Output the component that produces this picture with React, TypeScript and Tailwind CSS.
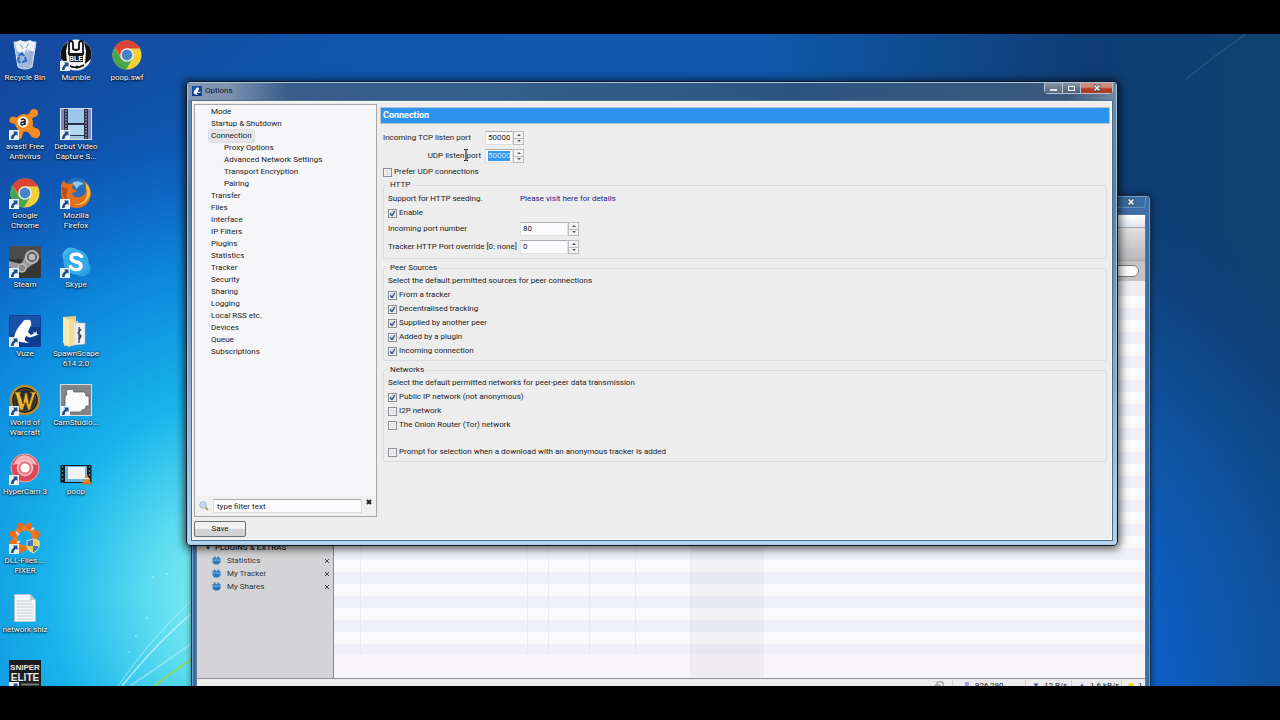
import type { ReactNode } from "react";

const Wallpaper = () => (
  <svg className="absolute inset-0 h-full w-full" viewBox="0 0 1280 652" preserveAspectRatio="none" aria-hidden="true">
    <defs>
      <linearGradient id="sky" x1="0" x2="1">
        <stop offset="0" stopColor="#1549a0" />
        <stop offset="0.3" stopColor="#1058ac" />
        <stop offset="0.6" stopColor="#1059ac" />
        <stop offset="0.85" stopColor="#0f3d74" />
        <stop offset="1" stopColor="#0f4270" />
      </linearGradient>
      <radialGradient id="glow" gradientUnits="userSpaceOnUse" cx="250" cy="560" r="560">
        <stop offset="0" stopColor="#9af4ee" />
        <stop offset="0.18" stopColor="#5cdcf0" />
        <stop offset="0.36" stopColor="#18b4ec" />
        <stop offset="0.6" stopColor="#0c86dc" />
        <stop offset="0.82" stopColor="#0c5cbc" stopOpacity="0.7" />
        <stop offset="1" stopColor="#0c56a8" stopOpacity="0" />
      </radialGradient>
      <radialGradient id="floor" gradientUnits="userSpaceOnUse" cx="920" cy="640" r="540">
        <stop offset="0" stopColor="#0c62c8" />
        <stop offset="0.46" stopColor="#0d5dc0" />
        <stop offset="0.62" stopColor="#1055a4" />
        <stop offset="0.82" stopColor="#0f4688" stopOpacity="0.8" />
        <stop offset="1" stopColor="#0f3c78" stopOpacity="0" />
      </radialGradient>
    </defs>
    <rect width="1280" height="652" fill="url(#sky)" />
    <rect x="380" width="900" height="652" fill="url(#floor)" />
    <rect width="1280" height="652" fill="url(#glow)" />
    <path d="M1185 46 Q1216 20 1246 0" stroke="#6f93b4" strokeWidth="1" fill="none" opacity="0.4" />
    <g fill="none" stroke="#d8fbff">
      <path d="M118 652 Q150 605 196 562" strokeWidth="1" opacity="0.6" />
      <path d="M122 652 Q160 605 196 576" strokeWidth="1.5" opacity="0.7" />
      <path d="M130 652 Q170 625 196 606" strokeWidth="2" opacity="0.4" />
      <path d="M154 652 Q176 636 196 622" stroke="#8fd85a" strokeWidth="2" />
    </g>
    <g fill="#e8feff" opacity="0.5">
      <circle cx="147" cy="584" r="1" />
      <circle cx="136" cy="602" r="1" />
      <circle cx="167" cy="540" r="1" />
      <circle cx="153" cy="543" r="1" />
      <circle cx="129" cy="618" r="1" />
    </g>
  </svg>
);

const Chrome = () => (
  <svg viewBox="0 0 32 32" className="h-8 w-8">
    <circle cx="16" cy="16" r="14.5" fill="#f3cf3a" />
    <path d="M16 16 L3.4 8.8 A14.5 14.5 0 0 1 28.8 9.2 H16 Z" fill="#dc4437" />
    <path d="M3.4 8.8 A14.5 14.5 0 0 0 15 30.5 L21.5 19.5 L16 22.5 L10 19 Z" fill="#4aa64a" />
    <path d="M3.6 8.6 L10.4 19 L16 9.3 H28.7 A14.5 14.5 0 0 0 3.6 8.6" fill="#dc4437" />
    <circle cx="16" cy="16" r="6.8" fill="#f0f2f2" />
    <circle cx="16" cy="16" r="5.4" fill="#4684c8" />
  </svg>
);

const RecycleBin = () => (
  <svg viewBox="0 0 32 32" className="h-8 w-8">
    <path d="M5 3 L9 28 Q16 32 23 28 L27 3 Z" fill="#b8cbe0" fillOpacity="0.85" stroke="#dbe8f4" />
    <path d="M6 4 L11 1 L16 3 L21 1 L26 4 L25 13 L20 11 L15 16 L8 12 Z" fill="#eef3f7" />
    <path d="M9 13 L12 22 M18 10 L15 17 M23 12 L20 24 M11 5 L14 10 M20 4 L17 9" stroke="#8ba3bd" />
    <path d="M10 17 l3 -3 l2 3 M16 18 l1 4 l-4 1 M11 24 l-2 -3 l1 -3" stroke="#2767c8" strokeWidth="2" fill="none" />
  </svg>
);

const Mumble = () => (
  <svg viewBox="0 0 32 32" className="h-8 w-8">
    <circle cx="16" cy="16" r="15.5" fill="#f5f5f5" />
    <path d="M1 20 Q-1 8 8 3 L6 12 L7 25 Z M31 20 Q33 8 24 3 L26 12 L25 25 Z" fill="#111" />
    <path d="M9 16 V5 Q9 2 11 2 Q13 2 13 5 V10 Q16 12 19 10 V5 Q19 2 21 2 Q23 2 23 5 V16" fill="none" stroke="#111" strokeWidth="1.8" />
    <rect x="9" y="14" width="14" height="9" fill="#151515" />
    <path d="M8 26 Q16 31 24 26" stroke="#111" strokeWidth="1.5" fill="none" />
    <circle cx="17" cy="28" r="1.6" fill="#111" />
    <text x="16" y="21.5" textAnchor="middle" fontSize="7" fontWeight="700" fill="#fff" fontFamily="Liberation Sans, sans-serif">BLE</text>
  </svg>
);

const Avast = () => (
  <svg viewBox="0 0 32 32" className="h-8 w-8">
    <g stroke="#f58a1e" strokeLinecap="round" fill="none">
      <path d="M14 15 L25 5" strokeWidth="6" />
      <path d="M14 15 L27 26" strokeWidth="8" />
      <path d="M14 15 L4 12" strokeWidth="7" />
      <path d="M14 15 L10 28" strokeWidth="6" />
    </g>
    <circle cx="25" cy="5" r="4" fill="#f58a1e" />
    <circle cx="26" cy="25" r="5" fill="#f58a1e" />
    <circle cx="15" cy="15" r="9" fill="#f58a1e" />
    <circle cx="14" cy="14" r="5.5" fill="#faf3e8" />
    <path d="M12 12 Q14 10 16 12 V17 M16 14 Q11.5 13.5 12 16 Q13 18 16 15.5" stroke="#222" strokeWidth="1.6" fill="none" />
  </svg>
);

const Debut = () => (
  <svg viewBox="0 0 32 32" className="h-8 w-8">
    <rect x="0.5" y="0.5" width="31" height="31" fill="#7f86bc" stroke="#d9e1ee" />
    <rect x="4" y="1" width="24" height="30" fill="#2a3048" />
    <rect x="8" y="1" width="16" height="14" fill="#9cc6ea" />
    <rect x="8" y="17" width="16" height="10" fill="#b4d6f0" />
    <rect x="8" y="28" width="16" height="3" fill="#a4c4e4" />
    <path d="M6 2 V31 M26 2 V31" stroke="#b9c0d0" strokeWidth="1.2" strokeDasharray="1.5 1.5" />
  </svg>
);

const Firefox = () => (
  <svg viewBox="0 0 32 32" className="h-8 w-8">
    <circle cx="17" cy="14" r="13" fill="#2b6cb8" />
    <path d="M12 6 Q18 2 24 7 Q18 8 17 12 Z" fill="#8cc8ee" />
    <path d="M1 8 Q3 4 4 3 Q5 7 9 7 Q12 6 14 7 Q11 10 13 12 L17 14 Q15 16 12 16 Q13 21 20 20 Q27 18 26 10 Q25 6 23 4 Q31 8 31 17 Q29 31 16 31 Q1 30 1 16 Z" fill="#e2701c" />
    <path d="M26 10 Q29 17 24 24 Q19 28 12 27 Q26 31 30 18 Q31 11 26 6 Z" fill="#f8c13a" />
    <path d="M2 10 Q2 22 9 27 Q4 18 8 12 Z" fill="#b84a16" />
  </svg>
);

const Steam = () => (
  <svg viewBox="0 0 32 32" className="h-8 w-8">
    <rect width="32" height="32" rx="2" fill="#353536" />
    <rect width="32" height="13" rx="2" fill="#4b4b4c" />
    <path d="M0 15 L0 21 L13 26 L27 16 L17 9 L12 18 Z" fill="#9b9c9d" />
    <circle cx="23" cy="11" r="7" fill="#b8b9ba" />
    <circle cx="23" cy="11" r="4.2" fill="#b8b9ba" stroke="#444" strokeWidth="1.4" />
    <circle cx="13" cy="22" r="4" fill="#888" stroke="#c0c0c0" strokeWidth="1.5" />
  </svg>
);

const Skype = () => (
  <svg viewBox="0 0 32 32" className="h-8 w-8">
    <circle cx="11" cy="10" r="8.5" fill="#45b4ea" />
    <circle cx="22" cy="22" r="8.5" fill="#2aa2e2" />
    <circle cx="16" cy="16" r="12.5" fill="#35aae8" />
    <path d="M21.5 10.5 Q19 7.5 15.5 8 Q11 8.5 11.2 12 Q11.5 15 16.5 16 Q21.5 17 21 20.5 Q20 24 15.5 23.6 Q12 23.3 10.5 20.5" stroke="#fff" strokeWidth="3.4" fill="none" strokeLinecap="round" />
  </svg>
);

const Frog = ({ className }: { className: string }) => (
  <svg viewBox="0 0 32 32" className={className}>
    <rect width="32" height="32" rx="2" fill="#0d3c90" />
    <path d="M1 1 H31 V12 Q14 10 1 22 Z" fill="#1a51ab" />
    <path d="M13 8 Q15 4 18 5 Q22 4 22 8 Q23 10 21 12 L19 17 L22 20 L25 18.5 L24 16 L26 18 L28 16 L27.5 19 L30 19 L26 21 L21 22.5 L17 21 Q15 24 16 25.5 L20 28 L11 27 L5 22 Q7 14 13 8 Z" fill="#fff" />
  </svg>
);

const Folder = () => (
  <svg viewBox="0 0 32 32" className="h-8 w-8">
    <path d="M3 2 L16 1 V29 L4 31 Z" fill="#e8cf7d" />
    <path d="M3 2 L9 5 V32 L3 28 Z" fill="#f9eab0" />
    <path d="M11 9 L18 6 V29 L11 31 Z" fill="#fbfbfb" stroke="#c4c4bc" strokeWidth="0.6" />
    <path d="M15 8 L25 8 V29 L15 30 Z" fill="#f1f2f4" stroke="#b4b7bb" strokeWidth="0.6" />
    <path d="M19 12 V28 M21 14 L18 18 L21 21 L19 25" stroke="#3c4858" strokeWidth="1.4" fill="none" />
    <path d="M9 5 L14 3 V29 L9 32 Z" fill="#f3dd91" />
  </svg>
);

const Warcraft = () => (
  <svg viewBox="0 0 32 32" className="h-8 w-8">
    <circle cx="16" cy="16" r="14" fill="#15191f" stroke="#b98d35" strokeWidth="2.4" />
    <circle cx="16" cy="16" r="11" fill="#262c31" stroke="#56502e" />
    <path d="M5 8 L12 8 L11 10 L14 20 L16 9 L18 9 L20 20 L23 10 L21 8 L28 8 L26 10 L21 26 L19 26 L16.5 18 L14 26 L11 26 L7 11 Z" fill="#e9b530" stroke="#6a4710" strokeWidth="0.8" />
  </svg>
);

const CamStudio = () => (
  <svg viewBox="0 0 32 32" className="h-8 w-8">
    <rect x="0.5" y="0.5" width="31" height="31" fill="#828486" stroke="#dadcde" />
    <path d="M6 6 L13 5 L14 8 H24 Q26 9 26 12 H29 V22 H26 Q26 26 22 26 L21 28 H9 L8 26 Q4 25 5 21 V13 L7 10 Z" fill="#fbfbfb" stroke="#55585a" strokeWidth="0.7" />
  </svg>
);

const HyperCam = () => (
  <svg viewBox="0 0 32 32" className="h-8 w-8">
    <circle cx="16" cy="15" r="14" fill="#df4656" stroke="#f1aab0" />
    <path d="M4 12 Q8 2 16 2 Q25 3 28 12 Q16 8 4 12 Z" fill="#f3b2b8" />
    <circle cx="16" cy="15" r="7.5" fill="#e87883" stroke="#f7c8cc" strokeWidth="1.5" />
    <circle cx="16" cy="15" r="4.5" fill="#fff" />
  </svg>
);

const VideoFile = () => (
  <svg viewBox="0 0 32 32" className="h-8 w-8">
    <rect x="0.5" y="12" width="31" height="18" fill="#161a1e" />
    <rect x="5" y="13" width="22" height="16" fill="#62b9e4" />
    <rect x="8" y="14" width="17" height="12" fill="#f0f4f8" />
    <path d="M2.5 13 V30 M29.5 13 V30" stroke="#6e777f" strokeWidth="1.4" strokeDasharray="2 2" />
    <path d="M27 21 L31 30 H23 Z" fill="#ee8420" />
    <path d="M25.5 25.5 H28.8" stroke="#fff" strokeWidth="1.2" />
    <path d="M22 30.5 H32" stroke="#e06c14" strokeWidth="1.6" />
  </svg>
);

const DllFixer = () => (
  <svg viewBox="0 0 32 32" className="h-8 w-8">
    <circle cx="16" cy="16" r="10" fill="none" stroke="#f07a22" strokeWidth="5" />
    <g fill="#f06a18">
      <circle cx="11" cy="4" r="3.2" />
      <circle cx="20" cy="4" r="3.2" />
      <circle cx="4" cy="12" r="3.2" />
      <circle cx="28" cy="12" r="3.2" />
      <circle cx="4" cy="21" r="3.2" />
      <circle cx="12" cy="27.5" r="3.2" />
    </g>
    <path d="M7 10 l3 3 M22 8 l3 -2 M8 21 l3 -2" stroke="#fbe5d2" strokeWidth="2" />
    <path d="M24 17 L30 19 V24 Q29 29 24 31 Q19 29 18 24 V19 Z" fill="#f4d04a" stroke="#dfe5ea" />
    <path d="M24 17.5 V24 H18.5 V19.3 Z M24 24 H29.5 Q28.5 28.5 24 30.5 Z" fill="#4478c4" />
  </svg>
);

const TextFile = () => (
  <svg viewBox="0 0 32 32" className="h-8 w-8">
    <path d="M5.5 3.5 H21 L26.5 9 V30.5 H5.5 Z" fill="#f4f6f8" stroke="#b6c2cc" />
    <path d="M21 3.5 V9 H26.5 Z" fill="#c2cdd6" />
    <path d="M8 10 H23 M8 13 H24 M8 16 H24 M8 19 H24 M8 22 H24 M8 25 H24 M8 28 H24" stroke="#bcc4ca" strokeWidth="0.8" />
  </svg>
);

const SniperElite = () => (
  <svg viewBox="0 0 32 32" className="h-8 w-8">
    <rect width="32" height="32" fill="#1c1c1e" />
    <g fill="#e8e8e8" textAnchor="middle" fontFamily="Liberation Sans, sans-serif" fontWeight="700">
      <text x="16" y="10" fontSize="8">SNIPER</text>
      <text x="16" y="21" fontSize="10">ELITE</text>
    </g>
    <path d="M12 24.5 H30" stroke="#777" strokeWidth="2" />
  </svg>
);

const ShortcutArrow = () => (
  <svg viewBox="0 0 10 10" className="absolute bottom-0 left-0 h-2.5 w-2.5">
    <rect width="10" height="10" fill="#e9f0f6" />
    <path d="M4 1.5 H8.5 V6 L7 4.7 Q4.5 6 4.5 9 H2 Q2 5 5.3 3 Z" fill="#1c4a8c" />
  </svg>
);

type Shortcut = { label: string; icon: ReactNode; linked?: boolean };

const columns: Shortcut[][] = [
  [
    { label: "Recycle Bin", icon: <RecycleBin /> },
    { label: "avast! Free Antivirus", icon: <Avast />, linked: true },
    { label: "Google Chrome", icon: <Chrome />, linked: true },
    { label: "Steam", icon: <Steam />, linked: true },
    { label: "Vuze", icon: <Frog className="h-8 w-8" />, linked: true },
    { label: "World of Warcraft", icon: <Warcraft />, linked: true },
    { label: "HyperCam 3", icon: <HyperCam />, linked: true },
    { label: "DLL-Files.... FIXER", icon: <DllFixer />, linked: true },
    { label: "network shiz", icon: <TextFile /> },
    { label: "", icon: <SniperElite />, linked: true },
  ],
  [
    { label: "Mumble", icon: <Mumble />, linked: true },
    { label: "Debut Video Capture S...", icon: <Debut />, linked: true },
    { label: "Mozilla Firefox", icon: <Firefox />, linked: true },
    { label: "Skype", icon: <Skype />, linked: true },
    { label: "SpawnScape 614 2.0", icon: <Folder /> },
    { label: "CamStudio...", icon: <CamStudio />, linked: true },
    { label: "poop", icon: <VideoFile /> },
  ],
  [{ label: "poop.swf", icon: <Chrome /> }],
];

const DesktopIcons = () => (
  <div className="relative flex items-start gap-px pt-[5px]">
    {columns.map((items, i) => (
      <ul key={i} className="flex w-[50px] flex-col">
        {items.map((item) => (
          <li key={item.label} className="flex h-[69px] flex-col items-center gap-[2px]">
            <div className="relative">
              {item.icon}
              {item.linked && <ShortcutArrow />}
            </div>
            <span className="text-center text-[8px] leading-[10px] text-white [text-shadow:0_1px_2px_#000,0_0_2px_#000]">
              {item.label}
            </span>
          </li>
        ))}
      </ul>
    ))}
  </div>
);

const Puzzle = () => (
  <svg viewBox="0 0 10 10" className="h-[9px] w-[9px]">
    <path d="M2 0.5 H4 V2.5 H6 V0.5 H8 V2.5 H9.5 V6 Q9 9.5 5 9.5 Q1 9.5 0.5 6 V2.5 H2 Z" fill="#2878ba" />
    <path d="M0.5 4.5 H9.5" stroke="#8cc2ea" strokeWidth="1" />
  </svg>
);

const CloseGlyph = () => (
  <svg viewBox="0 0 8 8" className="h-2 w-2">
    <path d="M1 1 L7 7 M7 1 L1 7" stroke="#33404e" strokeWidth="2.6" />
    <path d="M1.5 1.5 L6.5 6.5 M6.5 1.5 L1.5 6.5" stroke="#fff" strokeWidth="1.6" />
  </svg>
);

const VuzeWindow = () => (
  <section className="absolute top-[161px] right-[129px] -bottom-[9px] left-[191px] flex flex-col rounded-t border border-[#16304e] bg-[#3a6ea5] px-[4px] shadow-[0_0_6px_rgba(0,0,0,0.5),inset_0_0_0_1px_#6f9fc8]">
    <header className="flex h-[18px] items-start justify-end">
      <button aria-label="Close Vuze" className="flex h-3 w-[31px] items-center justify-center rounded-b-sm border border-t-0 border-[#6a90b8]">
        <CloseGlyph />
      </button>
    </header>
    <div className="flex min-h-0 flex-1 flex-col border border-[#5c7c9c] bg-[#f7f5f8]">
      <div className="h-3 bg-linear-to-b from-white to-[#dfe4ee]" />
      <div className="h-[34px] border-y border-[#a8a8ab] bg-linear-to-b from-[#e0e0e2] to-[#b8b8bb]" />
      <div className="flex h-5 items-center justify-end bg-[#c4c4c6] pr-1.5">
        <input aria-label="Search" className="h-3 w-24 rounded-full border border-[#777] bg-white" />
      </div>
      <div className="flex min-h-0 flex-1">
        <aside className="flex w-[137px] flex-col justify-end border-r border-[#88888c] bg-[#d4d4d6] pb-[85px] text-[8px] text-[#333]">
          <h2 className="flex items-center gap-1 pl-2 leading-[13px] font-medium text-[#1d1d1d]">
            <span className="text-[6px]">▼</span>PLUGINS &amp; EXTRAS
          </h2>
          <ul>
            {["Statistics", "My Tracker", "My Shares"].map((name) => (
              <li key={name} className="flex h-[13px] items-center gap-1.5 pr-[3px] pl-[15px]">
                <Puzzle />
                <span className="flex-1">{name}</span>
                <button aria-label={`Close ${name}`}>
                  <svg viewBox="0 0 6 6" className="h-1.5 w-1.5">
                    <path d="M1 1 L5 5 M5 1 L1 5" stroke="#444" />
                  </svg>
                </button>
              </li>
            ))}
          </ul>
        </aside>
        <div className="flex flex-1 flex-col">
          <div className="h-[15px] bg-[#ececee]" />
          <div className="flex flex-1 bg-[repeating-linear-gradient(#fafafc_0px,#fafafc_12px,#f0f0fa_12px,#f0f0fa_24px)]">
            <div className="w-[27px] border-r border-[#eaeaf2]" />
            <div className="w-[167px] border-r border-[#eaeaf2]" />
            <div className="w-[21px] border-r border-[#eaeaf2]" />
            <div className="w-[41px] border-r border-[#eaeaf2]" />
            <div className="w-[46px] border-r border-[#eaeaf2]" />
            <div className="w-[54px]" />
            <div className="w-[74px] bg-black/3" />
          </div>
          <div className="flex h-[23px]">
            <div className="ml-[356px] w-[74px] bg-black/3" />
          </div>
        </div>
      </div>
      <footer className="flex h-[15px] items-center justify-end border-t border-[#909094] bg-[#ececec] text-[8px] whitespace-nowrap text-[#222]">
        <svg viewBox="0 0 10 10" className="mr-2 h-2.5 w-2.5" fill="none" stroke="#888">
          <path d="M3 4 V1 H9 V7 H6 M1 4 H6 V9 H1 Z" />
        </svg>
        <span className="flex w-[73px] items-center gap-1.5 border-l border-[#d0d0d0] pl-3">
          <span className="h-2 w-1 bg-[#a0a0e0]" />926,290
        </span>
        <span className="flex w-[46px] items-center gap-1 border-l border-[#d0d0d0] pl-1.5">
          <span className="text-[#4a58c8]">▼</span>12 B/s
        </span>
        <span className="flex w-[50px] items-center gap-1 border-l border-[#d0d0d0] pl-1.5">
          <span className="text-[#4a58c8]">▲</span>1.6 kB/s
        </span>
        <span className="flex w-[24px] items-center gap-1 border-l border-[#d0d0d0] pl-1.5">
          <span className="h-1.5 w-1.5 rounded-full bg-[#e0e020]" />1
        </span>
      </footer>
    </div>
  </section>
);

const tree = [
  { name: "Mode" },
  { name: "Startup & Shutdown" },
  { name: "Connection", active: true },
  { name: "Proxy Options", nested: true },
  { name: "Advanced Network Settings", nested: true },
  { name: "Transport Encryption", nested: true },
  { name: "Pairing", nested: true },
  { name: "Transfer" },
  { name: "Files" },
  { name: "Interface" },
  { name: "IP Filters" },
  { name: "Plugins" },
  { name: "Statistics" },
  { name: "Tracker" },
  { name: "Security" },
  { name: "Sharing" },
  { name: "Logging" },
  { name: "Local RSS etc." },
  { name: "Devices" },
  { name: "Queue" },
  { name: "Subscriptions" },
];

const Sidebar = () => (
  <div className="flex w-[183px] flex-col gap-1">
    <div className="flex min-h-0 flex-1 flex-col border border-[#a4a6aa] bg-[#f6f5f7]">
      <ul className="flex-1 pt-px">
        {tree.map((item) => (
          <li key={item.name} className={item.nested ? "flex h-3 pl-[27px]" : "flex h-3 pl-[14px]"}>
            <button
              className={
                item.active
                  ? "h-3 rounded-xs bg-[#e6e6e8] px-0.5 leading-3 outline outline-[#dcdcde]"
                  : "h-3 px-0.5 leading-3"
              }
            >
              {item.name}
            </button>
          </li>
        ))}
      </ul>
      <div className="flex items-center gap-1 bg-[#f0f0f0] px-1 py-[3px]">
        <svg viewBox="0 0 10 10" className="h-2.5 w-2.5">
          <path d="M6 6 L9 9" stroke="#a89a50" strokeWidth="2" />
          <circle cx="4" cy="4" r="3.3" fill="#c3d8ee" stroke="#a9bdd4" />
        </svg>
        <input
          aria-label="Filter"
          defaultValue="type filter text"
          className="h-[14px] min-w-0 flex-1 border border-[#dcdce0] border-t-[#a9a9ae] bg-[#fbfafc] px-[3px]"
        />
        <button aria-label="Clear filter" className="self-start">
          <svg viewBox="0 0 6 6" className="h-1.5 w-1.5">
            <path d="M1 1 L5 5 M5 1 L1 5" stroke="#222" strokeWidth="2" />
          </svg>
        </button>
      </div>
    </div>
    <button className="h-4 w-[52px] rounded-xs border border-[#707072] bg-linear-to-b from-[#f2f2f2] from-45% to-[#d2d2d3] to-55% leading-3">
      Save
    </button>
  </div>
);

const Spinner = ({ id, value, wide, selected }: { id: string; value: string; wide?: boolean; selected?: boolean }) => (
  <span className={wide ? "flex h-[14px] w-[59px]" : "flex h-[14px] w-[39px]"}>
    <span className="flex min-w-0 flex-1 items-center border border-[#dfe0e3] border-t-[#abadb3] bg-[#fbfafc] px-0.5">
      <input
        id={id}
        defaultValue={value}
        inputMode="numeric"
        className={selected ? "h-2.5 w-full bg-[#3298f0] text-[#c9e4fb]" : "h-2.5 w-full"}
      />
    </span>
    <span className="flex w-[11px] flex-col border border-[#b9babd] bg-[#f2f2f2] text-[#555]">
      <button aria-label="Increase" className="flex flex-1 items-center justify-center border-b border-[#b9babd]">
        <svg viewBox="0 0 4 2" className="h-0.5 w-1">
          <path d="M0 2 L2 0 L4 2 Z" fill="currentColor" />
        </svg>
      </button>
      <button aria-label="Decrease" className="flex flex-1 items-center justify-center">
        <svg viewBox="0 0 4 2" className="h-0.5 w-1">
          <path d="M0 0 L2 2 L4 0 Z" fill="currentColor" />
        </svg>
      </button>
    </span>
  </span>
);

const Check = ({ label, checked }: { label: string; checked?: boolean }) => (
  <label className="flex h-[14px] items-center gap-0.5">
    <span className="relative flex">
      <input
        type="checkbox"
        defaultChecked={checked}
        className="peer h-[9px] w-[9px] appearance-none border border-[#8b8d90] bg-[#e4e6ea] shadow-[inset_0_0_0_1px_#f4f4f4] checked:bg-[#cfd9e6]"
      />
      <svg viewBox="0 0 9 9" className="pointer-events-none absolute inset-0 hidden h-[9px] w-[9px] peer-checked:block">
        <path d="M2 4.5 L4 6.5 L7 2" stroke="#33447c" strokeWidth="1.2" fill="none" />
      </svg>
    </span>
    {label}
  </label>
);

const Group = ({ title, children }: { title: string; children: ReactNode }) => (
  <fieldset className="rounded-xs border border-[#dcdde0] pl-1">
    <legend className="px-0.5 leading-3">{title}</legend>
    {children}
  </fieldset>
);

const ConnectionPage = () => (
  <main className="flex min-w-0 flex-1 flex-col pt-[3px]">
    <h1 className="flex h-[17px] items-center border border-[#b4c2cc] bg-[#2d93f0] pl-0.5 text-[9px] font-bold text-white">
      Connection
    </h1>
    <form className="flex flex-col gap-[3px] pt-[3px] pr-[3px] pl-[3px]">
      <div className="flex flex-col">
        <div className="flex flex-col gap-1 pt-1 pb-0.5">
          <div className="flex items-center gap-1">
            <label htmlFor="tcp" className="w-[98px]">Incoming TCP listen port</label>
            <Spinner id="tcp" value="50000" />
          </div>
          <div className="flex items-center gap-1">
            <label htmlFor="udp" className="w-[98px] text-right">UDP listen port</label>
            <Spinner id="udp" value="50000" selected />
          </div>
        </div>
        <Check label="Prefer UDP connections" />
        <Group title="HTTP">
          <div className="flex h-[15px] items-center">
            <span className="w-[132px]">Support for HTTP seeding.</span>
            <a href="#http-seeding" className="text-[#23238e]">Please visit here for details</a>
          </div>
          <Check label="Enable" checked />
          <div className="flex flex-col gap-1 pt-0.5 pb-1">
            <div className="flex items-center">
              <label htmlFor="http-port" className="w-[132px]">Incoming port number</label>
              <Spinner id="http-port" value="80" wide />
            </div>
            <div className="flex items-center">
              <label htmlFor="override" className="w-[132px] whitespace-nowrap">Tracker HTTP Port override [0: none]</label>
              <Spinner id="override" value="0" wide />
            </div>
          </div>
        </Group>
      </div>
      <Group title="Peer Sources">
        <p className="leading-[14px]">Select the default permitted sources for peer connections</p>
        <Check label="From a tracker" checked />
        <Check label="Decentralised tracking" checked />
        <Check label="Supplied by another peer" checked />
        <Check label="Added by a plugin" checked />
        <Check label="Incoming connection" checked />
        <div className="h-0.5" />
      </Group>
      <Group title="Networks">
        <p className="leading-[14px]">Select the default permitted networks for peer-peer data transmission</p>
        <Check label="Public IP network (not anonymous)" checked />
        <Check label="I2P network" />
        <Check label="The Onion Router (Tor) network" />
        <div className="h-[13px]" />
        <Check label="Prompt for selection when a download with an anonymous tracker is added" />
        <div className="h-0.5" />
      </Group>
    </form>
  </main>
);

const OptionsWindow = () => (
  <section className="absolute top-[47px] right-[162px] bottom-[140px] left-[186px] flex flex-col rounded border border-[#0c1826] bg-linear-to-b from-[#6c8cae] via-[#5f7f9f] via-25% to-[#b4d4ee] px-[4px] pb-[4px] text-[8px] text-[#222] shadow-[0_1px_8px_2px_rgba(0,0,0,0.65),inset_0_0_0_1px_#a9c6e0]">
    <header className="-mx-[3px] mt-px flex h-[17px] items-start bg-[linear-gradient(90deg,#8296b4_0,#7e93b0_40px,#385d8a_100px,#34608e_300px,#2c5583_600px,#3a5a7c_880px,#75899e)] pr-[3px] pl-1">
      <div className="flex h-[15px] flex-1 items-center gap-[3px] text-[#0d1520]">
        <Frog className="h-2.5 w-2.5" />
        Options
      </div>
      <div className="flex h-[11px] rounded-b-sm border border-t-0 border-[#b4c2d2]">
        <button aria-label="Minimize" className="flex w-[18px] items-center justify-center border-r border-[#b4c2d2] bg-linear-to-b from-[#8696a8] to-[#56687e]">
          <span className="mt-1 h-0.5 w-[7px] bg-[#dfe4e8]" />
        </button>
        <button aria-label="Maximize" className="flex w-[18px] items-center justify-center border-r border-[#b4c2d2] bg-linear-to-b from-[#8696a8] to-[#4c5e74]">
          <span className="h-[5px] w-[7px] border border-white" />
        </button>
        <button aria-label="Close" className="flex w-[31px] items-center justify-center bg-linear-to-b from-[#d08a80] from-40% to-[#b23a24] to-60%">
          <CloseGlyph />
        </button>
      </div>
    </header>
    <div className="flex min-h-0 flex-1 gap-[3px] border border-[#4e6c8c] bg-[#ededee] px-0.5 pt-[3px] pb-[3px] shadow-[inset_0_0_0_1px_#fafafa]">
      <Sidebar />
      <ConnectionPage />
    </div>
  </section>
);

const TextCursor = () => (
  <svg viewBox="0 0 6 12" className="absolute top-[115px] left-[463px] h-3 w-1.5" fill="none" stroke="#111">
    <path d="M1 0.5 H2.5 L3 1 L3.5 0.5 H5 M3 1 V11 M1 11.5 H2.5 L3 11 L3.5 11.5 H5" />
  </svg>
);

export default function App() {
  return (
    <div className="flex h-screen flex-col bg-black py-[34px] font-[Roboto,'Open_Sans',sans-serif]">
      <div className="relative flex-1 overflow-hidden">
        <Wallpaper />
        <DesktopIcons />
        <VuzeWindow />
        <OptionsWindow />
        <TextCursor />
      </div>
    </div>
  );
}
